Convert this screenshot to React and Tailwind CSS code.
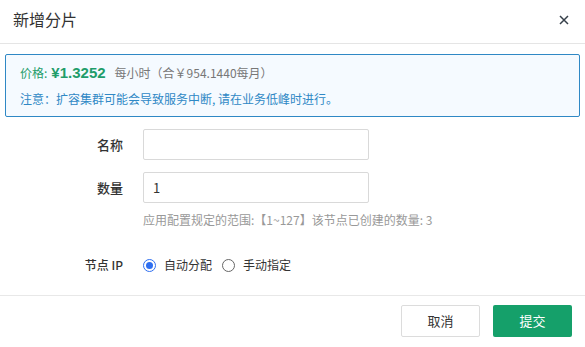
export default function App() {
  return (
    <div
      className="w-[585px] h-[347px] bg-white flex flex-col text-[#333]"
      style={{ fontFamily: '"Noto Sans CJK SC", "Noto Sans", sans-serif' }}
    >
      <div className="h-[44px] flex items-center justify-between pl-[13px] pr-[16px] border-b border-[#e5e5e5] shrink-0">
        <span className="text-[16px] text-[#333] leading-none mb-[6px]">新增分片</span>
        <svg width="10" height="10" viewBox="0 0 10 10" className="mt-[-4px]">
          <path d="M1 1L9 9M9 1L1 9" stroke="#36404a" strokeWidth="1.5" />
        </svg>
      </div>
      <div className="px-[5px] pt-[10px]">
        <div className="h-[63px] border border-[#2f88c5] rounded-[2px] bg-[#f5faff] pl-[14px] flex flex-col justify-center gap-[8px]">
          <div className="flex items-baseline text-[12px] leading-[18px]">
            <span className="text-[#1f9d6a]">价格:</span>
            <span className="text-[#1f9d6a] font-bold text-[15px] ml-[4px]" style={{ fontFamily: '"Liberation Sans", sans-serif' }}>¥1.3252</span>
            <span className="text-[#777] ml-[9px]">每小时（合￥954.1440每月）</span>
          </div>
          <div className="text-[12px] leading-[18px] text-[#2f88c5]">注意：扩容集群可能会导致服务中断, 请在业务低峰时进行。</div>
        </div>
      </div>
      <div className="flex flex-col pt-[12px]">
        <div className="flex items-center h-[31px]">
          <label className="w-[123px] text-right text-[13px] font-medium text-[#333]">名称</label>
          <input className="ml-[20px] w-[226px] h-[31px] border border-[#d9d9d9] rounded-[2px] outline-none px-[10px] text-[13px]" />
        </div>
        <div className="flex items-center h-[31px] mt-[12px]">
          <label className="w-[123px] text-right text-[13px] font-medium text-[#333]">数量</label>
          <input defaultValue="1" className="ml-[20px] w-[226px] h-[31px] border border-[#d9d9d9] rounded-[2px] outline-none px-[9px] text-[13px] text-[#333]" />
        </div>
        <div className="ml-[143px] mt-[8px] text-[12px] text-[#999] leading-[18px]">应用配置规定的范围:【1~127】该节点已创建的数量: 3</div>
        <div className="flex items-center h-[20px] mt-[26px]">
          <label className="w-[123px] text-right text-[12px] font-medium text-[#333]">节点 IP</label>
          <div className="ml-[20px] flex items-center text-[12px] text-[#333]">
            <span className="w-[13px] h-[13px] rounded-full border border-[#2f6ff0] flex items-center justify-center">
              <span className="w-[7px] h-[7px] rounded-full bg-[#2f6ff0]" />
            </span>
            <span className="ml-[8px]">自动分配</span>
            <span className="ml-[10px] w-[13px] h-[13px] rounded-full border border-[#666]" />
            <span className="ml-[8px]">手动指定</span>
          </div>
        </div>
      </div>
      <div className="mt-auto border-t border-[#e8e8e8] h-[52px] flex items-center justify-end pr-[13px] gap-[13px] pb-[2px]">
        <button className="w-[79px] h-[32px] border border-[#dcdcdc] rounded-[2px] bg-white text-[13px] text-[#333]">取消</button>
        <button className="w-[79px] h-[32px] rounded-[2px] bg-[#15a06a] text-[13px] text-white">提交</button>
      </div>
    </div>
  );
}
